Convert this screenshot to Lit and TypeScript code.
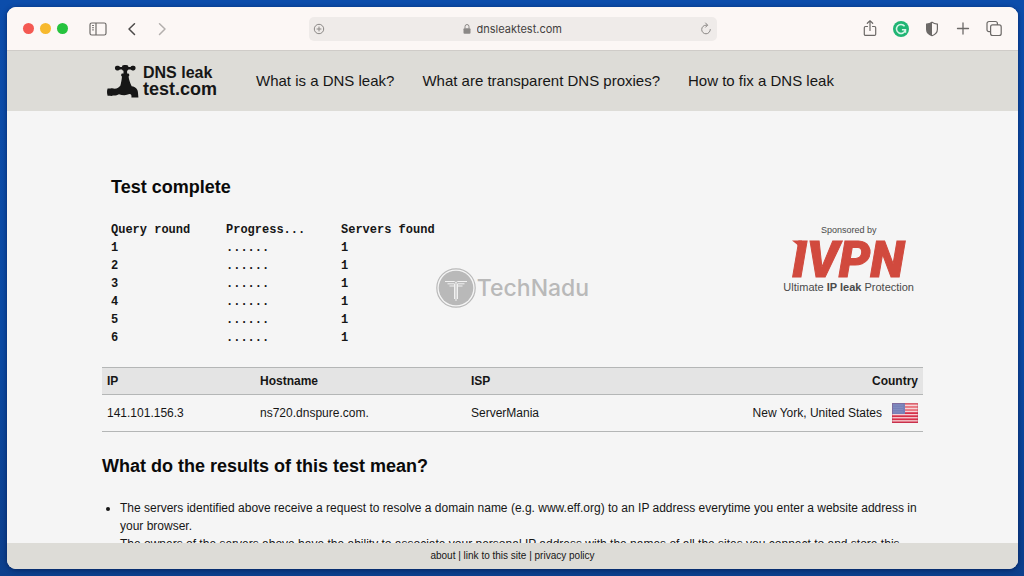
import { LitElement, html, css, svg } from "lit";
import { customElement } from "lit/decorators.js";

const ROUNDS = [1, 2, 3, 4, 5, 6];
const NAV = ["What is a DNS leak?", "What are transparent DNS proxies?", "How to fix a DNS leak"];
const FOOTER = ["about", "link to this site", "privacy policy"];

@customElement("browser-toolbar")
class BrowserToolbar extends LitElement {
  static styles = css`
    :host {
      display: block;
      font-family: Inter, "Liberation Sans", sans-serif;
    }
    .bar {
      display: grid;
      grid-template-columns: 1fr 408px 1fr;
      align-items: center;
      height: 44px;
      box-sizing: border-box;
      padding: 0 16px;
      background: #fcf7f5;
      border-bottom: 1px solid #cfccc8;
    }
    .group {
      display: flex;
      align-items: center;
    }
    .lights {
      gap: 6px;
      margin-right: 20px;
    }
    .right {
      justify-content: flex-end;
      gap: 11px;
      margin-right: -2px;
    }
    button {
      display: flex;
      padding: 0;
      border: 0;
      background: none;
      color: #6c6967;
    }
    svg {
      display: block;
    }
    .light {
      width: 11px;
      height: 11px;
      border-radius: 50%;
    }
    .red { background: #f45952; }
    .yellow { background: #f7b92e; }
    .green { background: #26c33e; }
    .back { margin-left: 14px; color: #4c4a49; }
    .forward { margin-left: 10px; color: #b3afad; }
    .address {
      display: flex;
      align-items: center;
      justify-content: space-between;
      height: 24px;
      padding: 0 4px 0 3px;
      background: #efebe9;
      border-radius: 5px;
    }
    .address button { color: #8b8886; }
    .site {
      display: flex;
      align-items: center;
      gap: 3px;
      color: #8b8886;
    }
    input {
      width: 86px;
      height: 20px;
      padding: 0 0 0 2px;
      border: 0;
      outline: 0;
      background: none;
      font: 11px/20px Inter, "Liberation Sans", sans-serif;
      color: #444140;
    }
  `;

  render() {
    return html`
      <div class="bar">
        <div class="group">
          <div class="group lights">
            <button class="light red" aria-label="Close"></button>
            <button class="light yellow" aria-label="Minimise"></button>
            <button class="light green" aria-label="Zoom"></button>
          </div>
          <button aria-label="Sidebar">
            <svg width="20" height="20" viewBox="0 0 20 20" fill="none" stroke="currentColor" stroke-width="1.2">
              <rect x="2" y="4" width="16" height="12" rx="1.8" />
              <path d="M8 4v12" />
              <path d="M4 6.5h2M4 8.7h2M4 10.9h2" stroke-width=".9" />
            </svg>
          </button>
          <button class="back" aria-label="Back">
            <svg width="20" height="20" viewBox="0 0 20 20" fill="none" stroke="currentColor" stroke-width="1.5" stroke-linecap="round" stroke-linejoin="round"><path d="M12.5 4.700 7 10l5.500 5.500" /></svg>
          </button>
          <button class="forward" aria-label="Forward">
            <svg width="20" height="20" viewBox="0 0 20 20" fill="none" stroke="currentColor" stroke-width="1.5" stroke-linecap="round" stroke-linejoin="round"><path d="M7.500 4.700 13 10l-5.500 5.500" /></svg>
          </button>
        </div>
        <div class="address">
          <button aria-label="Add page">
            <svg width="14" height="14" viewBox="0 0 14 14" fill="none" stroke="currentColor"><circle cx="7" cy="7" r="4.7" /><path d="M4.600 7h4.800M7 4.600v4.800" /></svg>
          </button>
          <div class="site">
            <svg width="10" height="12" viewBox="0 0 10 12"><rect x="1.500" y="5.200" width="7" height="5.600" rx="1" fill="currentColor" /><path d="M3 5.500V3.700a2 2.200 0 0 1 4 0v1.800" fill="none" stroke="currentColor" /></svg>
            <input aria-label="Address" value="dnsleaktest.com" />
          </div>
          <button aria-label="Reload">
            <svg width="14" height="14" viewBox="0 0 14 14" fill="none" stroke="currentColor" stroke-linecap="round" stroke-linejoin="round"><path d="M11.300 7.500a4.300 4.300 0 1 1-4.300-4.300h1.200M6.600 1l2 2.200-2 2" /></svg>
          </button>
        </div>
        <div class="group right">
          <button aria-label="Share">
            <svg width="20" height="20" viewBox="0 0 20 20" fill="none" stroke="currentColor" stroke-width="1.2" stroke-linejoin="round" stroke-linecap="round"><path d="M7.500 7.500H5.500a1.200 1.200 0 0 0-1.200 1.200v6.500a1.200 1.200 0 0 0 1.200 1.200h9a1.200 1.200 0 0 0 1.200-1.200V8.700a1.200 1.200 0 0 0-1.200-1.200h-2M10 11.500V1.800M7.300 4.300 10 1.800l2.700 2.500" /></svg>
          </button>
          <button aria-label="Grammar checker">
            <svg width="20" height="20" viewBox="0 0 20 20"><circle cx="10" cy="10" r="8" fill="#20b574" /><path d="M13.600 7.200A4.500 4.500 0 1 0 14.400 11M10.900 10.800h3.600v3" fill="none" stroke="#d8f5e8" stroke-width="1.5" /></svg>
          </button>
          <button aria-label="Privacy report">
            <svg width="20" height="20" viewBox="0 0 20 20"><path d="M10 3.300c1.700 1.200 3.600 1.700 5.400 1.900v5c0 3.200-2.400 5.400-5.400 6.500-3-1.100-5.400-3.300-5.400-6.500v-5C6.400 5 8.300 4.500 10 3.300z" fill="none" stroke="currentColor" stroke-width="1.2" /><path d="M10 3.300v13.400c-3-1.100-5.400-3.300-5.400-6.500v-5C6.400 5 8.300 4.500 10 3.300z" fill="currentColor" /></svg>
          </button>
          <button aria-label="New tab">
            <svg width="20" height="20" viewBox="0 0 20 20" fill="none" stroke="currentColor" stroke-width="1.3" stroke-linecap="round"><path d="M4.500 9.500h11M10 4v11" /></svg>
          </button>
          <button aria-label="Tab overview">
            <svg width="20" height="20" viewBox="0 0 20 20" fill="none" stroke="currentColor" stroke-width="1.2"><rect x="6.600" y="5.900" width="10.600" height="10.600" rx="2" /><path d="M6.600 12.700H5a2 2 0 0 1-2-2V4.500a2 2 0 0 1 2-2h6.400a2 2 0 0 1 2 2v1.400" /></svg>
          </button>
        </div>
      </div>
    `;
  }
}

@customElement("app-root")
class AppRoot extends LitElement {
  static styles = css`
    :host {
      display: block;
      height: 100vh;
      box-sizing: border-box;
      padding: 7px 6px 7px 7px;
      overflow: hidden;
      background: linear-gradient(#0c4dab, #0b4aa3 60%, #0c3f8c);
      font-family: "Liberation Sans", Arial, sans-serif;
      font-size: 12px;
      line-height: 18px;
      color: #161616;
    }
    a {
      color: inherit;
      text-decoration: none;
    }
    .window {
      position: relative;
      display: flex;
      flex-direction: column;
      height: 100%;
      overflow: hidden;
      border-radius: 9px;
      background: #f5f5f5;
      box-shadow: 0 1px 5px rgba(0, 15, 60, 0.6);
    }
    .wrap {
      max-width: 821px;
      margin: 0 auto;
    }
    header {
      background: #dddcd7;
    }
    .head {
      display: flex;
      align-items: center;
      height: 60px;
      box-sizing: border-box;
      padding-left: 5px;
    }
    .logo {
      display: flex;
      align-items: center;
      gap: 4px;
      width: 149px;
      font-size: 16px;
      line-height: 17px;
      font-weight: bold;
    }
    .logo small {
      display: block;
      font-size: 18px;
    }
    nav {
      display: flex;
      gap: 28px;
      font-size: 15px;
    }
    main {
      flex: 1;
      min-height: 0;
      overflow: hidden;
    }
    h2 {
      margin: 0;
      font-size: 18px;
      line-height: 22px;
      color: #0a0a0a;
    }
    .test {
      display: flex;
      justify-content: space-between;
      padding: 65px 9px 20px;
    }
    .rounds {
      margin-top: 23px;
      border-collapse: collapse;
      table-layout: fixed;
      width: 345px;
      font-family: "Liberation Mono", "Courier New", monospace;
      font-weight: bold;
      text-align: left;
    }
    .rounds th,
    .rounds td {
      padding: 0;
      white-space: nowrap;
    }
    .sponsor {
      display: flex;
      flex-direction: column;
      align-items: center;
      align-self: flex-end;
      margin-bottom: 53px;
      font-size: 11px;
      line-height: 14px;
      color: #4a4a4a;
    }
    .by {
      font-size: 9px;
    }
    .brand {
      display: block;
      overflow: visible;
      margin: 3px 0;
      font: italic 900 50px Roboto, "Liberation Sans", sans-serif;
    }
    .results {
      width: 100%;
      border-collapse: collapse;
      table-layout: fixed;
      text-align: left;
    }
    .results th,
    .results td {
      box-sizing: border-box;
      padding: 4px 5px;
      border-top: 1px solid #b4b6b6;
      border-bottom: 1px solid #b4b6b6;
    }
    .results th {
      background: #e4e4e4;
    }
    .results td {
      height: 37px;
    }
    .results .last {
      text-align: right;
    }
    .ip { width: 153px; }
    .host { width: 211px; }
    .isp { width: 220px; }
    .place {
      display: flex;
      align-items: center;
      justify-content: flex-end;
      gap: 10px;
    }
    .meaning {
      padding-top: 23px;
    }
    ul {
      margin: 22px 0 0;
      padding: 0 0 0 18px;
    }
    footer {
      line-height: 26px;
      background: #dddcd7;
      text-align: center;
      font-size: 10px;
    }
    .mark {
      position: absolute;
      inset: 0;
      display: flex;
      align-items: center;
      justify-content: center;
      gap: 1px;
      pointer-events: none;
      font: 500 23px/28px Inter, sans-serif;
      color: #b9b9b9;
    }
  `;

  flag() {
    return html`<svg width="26" height="20" viewBox="0 0 26 20" role="img" aria-label="United States flag">
      <rect width="26" height="20" fill="#f6d4d8" />
      ${[0, 1, 2, 3, 4, 5, 6].map((i) => svg`<rect y=${i * 3.077} width="26" height="1.8" fill=${i > 2 ? "#d6304a" : "#e8757d"} />`)}
      <rect width="13" height="11" fill="#7680b8" />
      <path d="M1.500 2h10M1.500 4.300h10M1.500 6.600h10M1.500 8.900h10" stroke="#9299c8" stroke-dasharray="1 1" />
      <rect x=".5" y=".5" width="25" height="19" fill="none" stroke="#a03050" stroke-opacity=".25" />
    </svg>`;
  }

  render() {
    return html`
      <div class="window">
        <browser-toolbar></browser-toolbar>
        <header>
          <div class="wrap head">
            <a class="logo" href="#">
              <svg width="32" height="34" viewBox="0 0 32 34" fill="#161616">
                <rect x="8" y="1.800" width="5" height="4.600" rx="1.800" />
                <rect x="23.500" y="1.800" width="5" height="4.600" rx="1.800" />
                <path d="M10 3h16v2.400H10z" />
                <rect x="14.800" y="1" width="6.800" height="6" rx="2.400" />
                <path d="M16.500 6h3.600v4h-3.600z" />
                <rect x="14.200" y="9.600" width="8" height="2.800" rx="1.200" />
                <path d="M15 12h6.500c.5 4 1.800 7.500 3.200 10.300C28.800 23 31 25.500 31 29l.4 4.500h-7c.3-2.300-.3-3.500-2-3.400-3.200 1.600-7.200 1.300-10.400.2-1.800.8-3.600 1.500-6 1.200-.8.500-1.700.6-2.600.3H.6c-.8-2.600-.8-5 0-7.300h3c.8-.4 1.700-.3 2.500.1 2 .2 3.700 0 5-.8.800-1 1.400-1.500 2.100-1.800C14 19.500 14.700 16 15 12z" />
              </svg>
              <span>DNS leak<small>test.com</small></span>
            </a>
            <nav>${NAV.map((t) => html`<a href="#">${t}</a>`)}</nav>
          </div>
        </header>
        <main>
          <div class="wrap">
            <section class="test">
              <div>
                <h2>Test complete</h2>
                <table class="rounds">
                  <thead>
                    <tr><th>Query round</th><th>Progress...</th><th>Servers found</th></tr>
                  </thead>
                  <tbody>
                    ${ROUNDS.map((n) => html`<tr><td>${n}</td><td>......</td><td>1</td></tr>`)}
                  </tbody>
                </table>
              </div>
              <a class="sponsor" href="#">
                <span class="by">Sponsored by</span>
                <svg class="brand" width="114" height="37" viewBox="0 0 114 37" fill="#d14a3e">
                  <text x="0" y="36.500" stroke="#d14a3e">IVPN</text>
                  <path d="M0 .5h10l-2 9-3-5z" />
                </svg>
                <span>Ultimate <b>IP leak</b> Protection</span>
              </a>
            </section>
            <table class="results">
              <thead>
                <tr><th class="ip">IP</th><th class="host">Hostname</th><th class="isp">ISP</th><th class="last">Country</th></tr>
              </thead>
              <tbody>
                <tr>
                  <td>141.101.156.3</td>
                  <td>ns720.dnspure.com.</td>
                  <td>ServerMania</td>
                  <td><div class="place">New York, United States ${this.flag()}</div></td>
                </tr>
              </tbody>
            </table>
            <section class="meaning">
              <h2>What do the results of this test mean?</h2>
              <ul>
                <li>The servers identified above receive a request to resolve a domain name (e.g. www.eff.org) to an IP address everytime you enter a website address in your browser.</li>
                <li>The owners of the servers above have the ability to associate your personal IP address with the names of all the sites you connect to and store this</li>
              </ul>
            </section>
          </div>
        </main>
        <footer>${FOOTER.map((t, i) => html`${i ? " | " : ""}<a href="#">${t}</a>`)}</footer>
        <div class="mark">
          <svg width="40" height="40" viewBox="0 0 40 40" fill="none" stroke="#b9b9b9">
            <circle cx="20" cy="20" r="19.200" stroke-width="1.2" />
            <circle cx="20" cy="20" r="17.300" fill="#b9b9b9" stroke="none" />
            <path d="M9 13.500h9.500l1.500 1.200 1.500-1.200H31M11.500 15.800h7v15.200M13.500 18h5M28.500 15.800h-7V31M26.500 18h-5M20 15v18" stroke="#f1f1f1" />
          </svg>
          <span>TechNadu</span>
        </div>
      </div>
    `;
  }
}
